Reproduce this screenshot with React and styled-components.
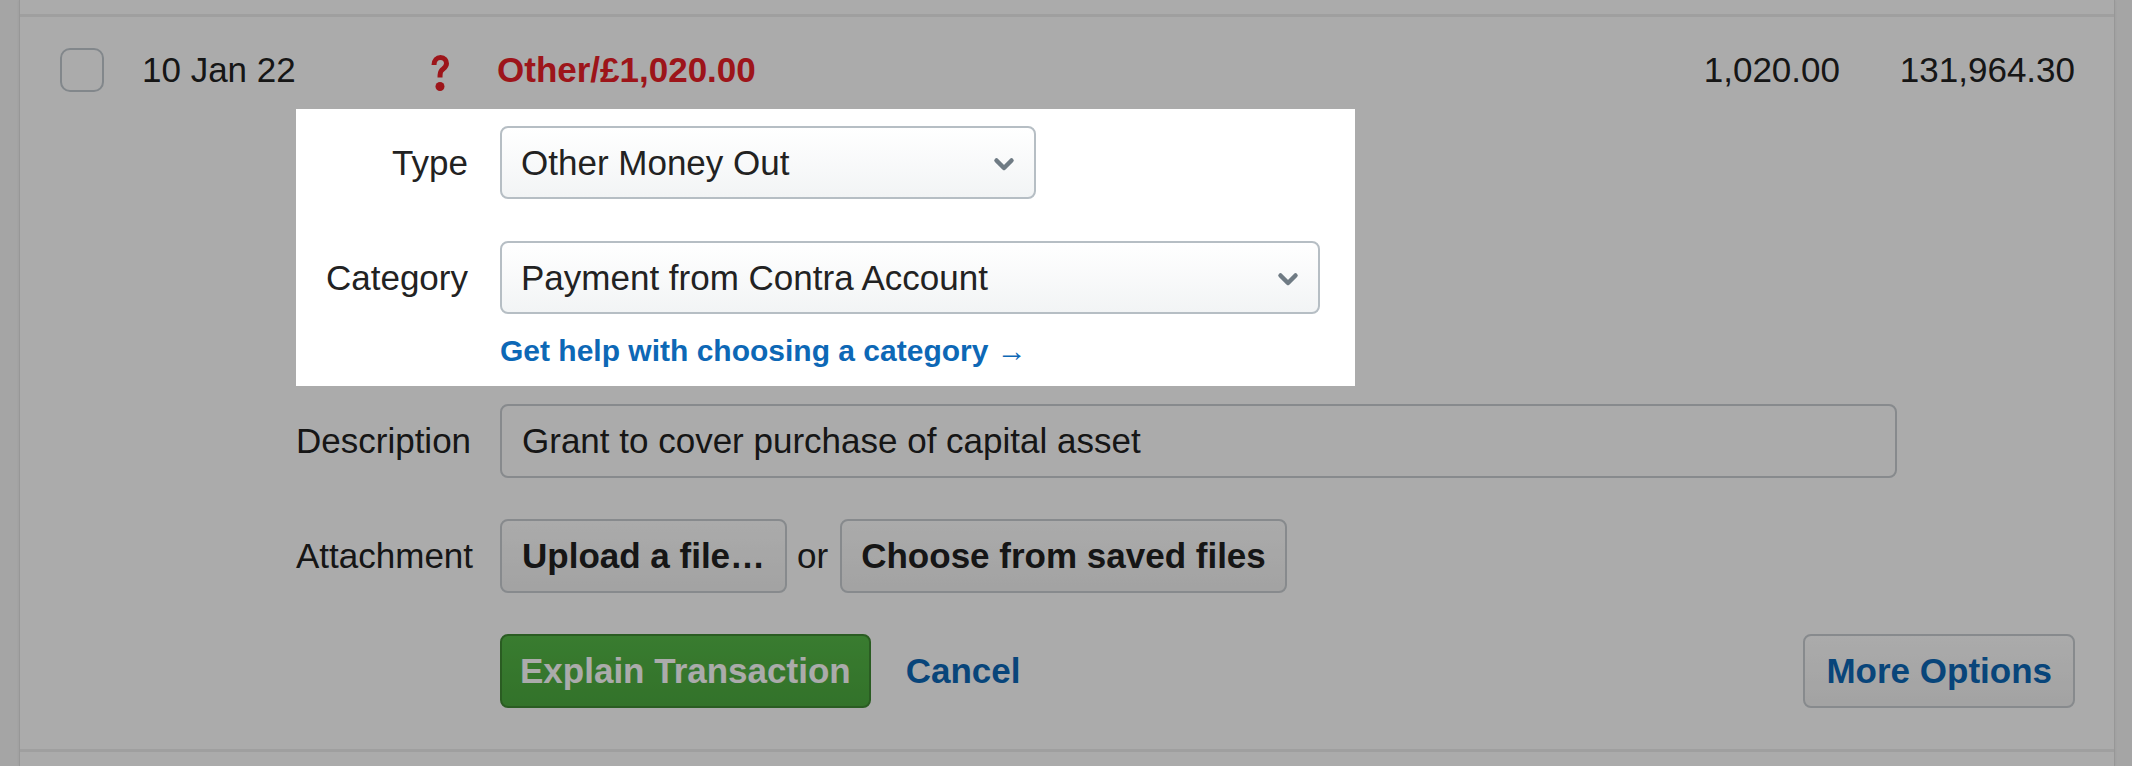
import styled, { createGlobalStyle } from "styled-components"

const GlobalStyle = createGlobalStyle`
    html, body {
        margin: 0;
        padding: 0;
        background: #f7f7f7;
        font-family: "Liberation Sans", Arial, sans-serif;
        color: #222;
        overflow: hidden;
    }
`

const Page = styled.div`
    display: flex;
    min-height: 100vh;
    padding: 0 17px 0 19px;
    box-sizing: border-box;
`
const Table = styled.div`
    flex: 1;
    background: #fff;
    border-left: 1px solid #e2e2e2;
    border-right: 1px solid #e2e2e2;
    box-shadow: 0 0 3px rgba(0, 0, 0, 0.08);
`
const PrevRow = styled.div`
    height: 14px;
    border-bottom: 3px solid #ededed;
`
const Row = styled.div`
    padding: 31px 39px 41px 40px;
    border-bottom: 3px solid #ededed;
`
const Header = styled.div`
    display: flex;
    align-items: center;
    height: 44px;
    font-size: 35px;
`
const Checkbox = styled.div`
    width: 44px;
    height: 44px;
    box-sizing: border-box;
    border: 2px solid #c2cad0;
    border-radius: 10px;
    margin-right: 38px;
    flex-shrink: 0;
`
const DateCell = styled.div`
    width: 289px;
`
const Unexplained = styled.svg`
    width: 18px;
    height: 36px;
    margin-top: 6px;
    margin-right: 48px;
    flex-shrink: 0;
`
const Summary = styled.div`
    flex: 1;
    font-weight: 700;
    color: #ea2027;
`
const Money = styled.div`
    width: ${props => props.w}px;
    text-align: right;
`
const Form = styled.div`
    margin: 17px 0 0 236px;
    display: flex;
    flex-direction: column;
`
const Spotlight = styled.div`
    position: relative;
    z-index: 1;
    width: 1059px;
    background: #fff;
    padding: 17px 0 18px;
    margin-bottom: 18px;
    display: flex;
    flex-direction: column;
    box-shadow: 0 0 0 4000px rgba(0, 0, 0, 0.33);
`
const Field = styled.div`
    display: grid;
    grid-template-columns: 172px 1fr;
    column-gap: 32px;
    align-items: center;
    margin-top: ${props => props.top || 0}px;
`
const Label = styled.div`
    font-size: 35px;
    text-align: right;
`
const Controls = styled.div`
    display: flex;
    align-items: center;
`
const SelectBox = styled.div`
    width: ${props => props.w}px;
    height: 73px;
    box-sizing: border-box;
    display: flex;
    align-items: center;
    justify-content: space-between;
    padding: 0 19px 0 19px;
    border: 2px solid #b6bec4;
    border-radius: 8px;
    background: linear-gradient(#ffffff, #f2f4f5);
    font-size: 35px;
`
const Chevron = styled.svg`
    width: 22px;
    height: 15px;
    margin-top: 3px;
`
const HelpLink = styled.a`
    margin: 20px 0 0 204px;
    font-size: 30px;
    font-weight: 700;
    color: #0d68b6;
    text-decoration: none;
    line-height: normal;
`
const TextInput = styled.input`
    width: 1397px;
    height: 74px;
    box-sizing: border-box;
    padding: 0 20px;
    border: 2px solid #c9ced2;
    border-radius: 8px;
    background: #fff;
    font-family: inherit;
    font-size: 35px;
    color: #222;
    outline: none;
`
const Button = styled.button`
    height: 74px;
    box-sizing: border-box;
    padding: 0 ${props => props.pad || 20}px;
    border-radius: 8px;
    border: 2px solid ${props => props.primary ? "#3f8a33" : "#c9ced2"};
    background: ${props => props.primary
        ? "linear-gradient(#55b947, #4cab3f)"
        : "linear-gradient(#ffffff, #f3f3f3)"};
    color: ${props => props.primary ? "#fff" : props.link ? "#0d68b6" : "#222"};
    font-family: inherit;
    font-size: 35px;
    font-weight: 700;
    margin-left: ${props => props.right ? "auto" : "0"};
`
const Or = styled.span`
    font-size: 35px;
    margin: 0 12px 0 10px;
`
const Cancel = styled.a`
    margin-left: 35px;
    font-size: 35px;
    font-weight: 700;
    color: #0d68b6;
    text-decoration: none;
`

function ChevronDown() {
    return (
        <Chevron viewBox="0 0 22 15">
            <path d="M3.5 3.5 L11 11 L18.5 3.5" fill="none" stroke="#6f7b84" strokeWidth="4.5" strokeLinecap="round" strokeLinejoin="round" />
        </Chevron>
    )
}

export default function App() {
    return (
        <>
            <GlobalStyle />
            <Page>
                <Table>
                    <PrevRow />
                    <Row>
                        <Header>
                            <Checkbox />
                            <DateCell>10 Jan 22</DateCell>
                            <Unexplained viewBox="0 0 18 36">
                                <path d="M3 10 C3 5 6 2.5 9.5 2.5 C13.5 2.5 15.5 5.5 15.5 8.5 C15.5 12 12.5 13.5 10.5 15.5 C9 17 9 19 9 22.5" fill="none" stroke="#ea2027" strokeWidth="5" />
                                <circle cx="9" cy="31.5" r="4.5" fill="#ea2027" />
                            </Unexplained>
                            <Summary>Other/£1,020.00</Summary>
                            <Money w={200}>1,020.00</Money>
                            <Money w={235}>131,964.30</Money>
                        </Header>
                        <Form>
                            <Spotlight>
                                <Field>
                                    <Label>Type</Label>
                                    <Controls>
                                        <SelectBox w={536}>
                                            <span>Other Money Out</span>
                                            <ChevronDown />
                                        </SelectBox>
                                    </Controls>
                                </Field>
                                <Field top={42}>
                                    <Label>Category</Label>
                                    <Controls>
                                        <SelectBox w={820}>
                                            <span>Payment from Contra Account</span>
                                            <ChevronDown />
                                        </SelectBox>
                                    </Controls>
                                </Field>
                                <HelpLink href="#">Get help with choosing a category →</HelpLink>
                            </Spotlight>
                            <Field>
                                <Label>Description</Label>
                                <Controls>
                                    <TextInput readOnly defaultValue="Grant to cover purchase of capital asset" />
                                </Controls>
                            </Field>
                            <Field top={41}>
                                <Label>Attachment</Label>
                                <Controls>
                                    <Button>Upload a file…</Button>
                                    <Or>or</Or>
                                    <Button pad={19}>Choose from saved files</Button>
                                </Controls>
                            </Field>
                            <Field top={41}>
                                <Label />
                                <Controls>
                                    <Button primary pad={18}>Explain Transaction</Button>
                                    <Cancel href="#">Cancel</Cancel>
                                    <Button link right pad={21}>More Options</Button>
                                </Controls>
                            </Field>
                        </Form>
                    </Row>
                </Table>
            </Page>
        </>
    )
}
